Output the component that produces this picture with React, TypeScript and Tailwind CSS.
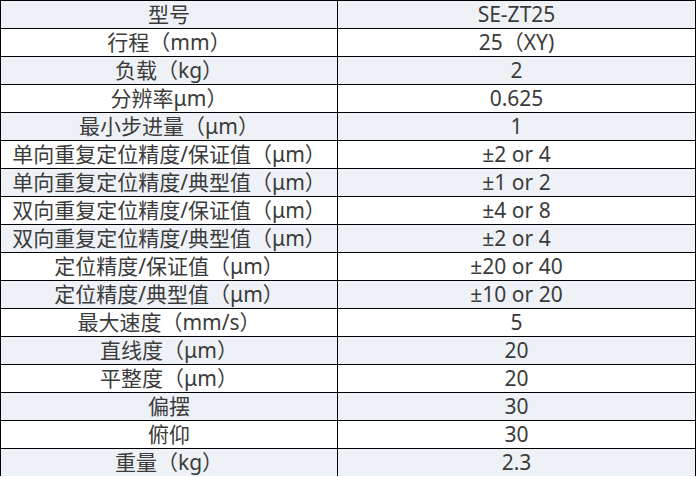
const rows: [string, string][] = [
  ['型号', 'SE-ZT25'],
  ['行程（mm）', '25（XY)'],
  ['负载（kg）', '2'],
  ['分辨率μm）', '0.625'],
  ['最小步进量（μm）', '1'],
  ['单向重复定位精度/保证值（μm）', '±2 or 4'],
  ['单向重复定位精度/典型值（μm）', '±1 or 2'],
  ['双向重复定位精度/保证值（μm）', '±4 or 8'],
  ['双向重复定位精度/典型值（μm）', '±2 or 4'],
  ['定位精度/保证值（μm）', '±20 or 40'],
  ['定位精度/典型值（μm）', '±10 or 20'],
  ['最大速度（mm/s）', '5'],
  ['直线度（μm）', '20'],
  ['平整度（μm）', '20'],
  ['偏摆', '30'],
  ['俯仰', '30'],
  ['重量（kg）', '2.3'],
];

export default function App() {
  return (
    <div
      className="w-[696px] h-[477px] overflow-hidden bg-white text-[#3b3b3b]"
      style={{ fontFamily: '"Noto Sans", "Noto Sans CJK SC", sans-serif' }}
    >
      <div className="border-l border-r border-black">
        {rows.map(([label, value], i) => (
          <div
            key={label}
            className={`grid grid-cols-[337px_1fr] h-[28px] border-t border-black text-[21px] leading-[27px] ${
              i % 2 === 0 ? 'bg-[#eef2f7]' : 'bg-white'
            }`}
          >
            <div className="flex items-center justify-center border-r border-black whitespace-nowrap">
              {label}
            </div>
            <div className="flex items-center justify-center whitespace-nowrap">{value}</div>
          </div>
        ))}
      </div>
    </div>
  );
}
